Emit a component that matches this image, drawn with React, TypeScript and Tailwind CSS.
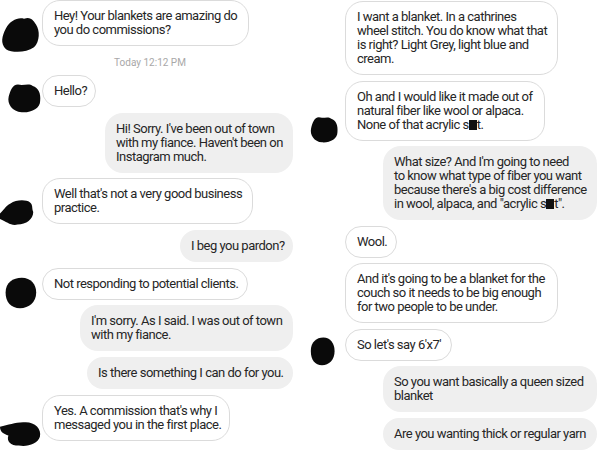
import type { ReactNode } from "react";

type Blob = { x: number; y: number; w: number; h: number; d: string };

const BLOBS: Record<string, string> = {
  a: "M6 14 C2 22 0 30 6 36 C12 40 26 40 34 34 C40 28 40 16 36 10 C32 4 30 2 24 4 C18 2 10 6 6 14 Z",
  b: "M4 18 C2 28 8 38 18 39 C28 40 38 34 38 24 C39 14 36 6 30 4 C26 0 20 4 14 2 C8 2 6 10 4 18 Z",
  c: "M0 22 C4 18 6 12 12 8 C18 2 30 2 34 6 C38 10 36 14 38 20 C38 30 30 38 20 38 C12 40 8 34 0 30 Z",
  d: "M4 20 C4 8 12 2 22 2 C32 2 38 10 38 20 C38 32 30 39 20 39 C10 39 4 32 4 20 Z",
  e: "M0 12 C8 10 14 6 22 6 C32 4 40 14 38 26 C36 36 26 40 18 38 C10 38 6 32 8 24 C4 22 0 20 0 12 Z",
};

function Smudge({ x, y, w, h, d }: Blob) {
  // redaction scribble over the avatar
  return (
    <svg
      viewBox="0 0 40 40"
      preserveAspectRatio="none"
      className="absolute"
      style={{ left: x, top: y, width: w, height: h }}
    >
      <path d={BLOBS[d]} fill="#0a0a0a" />
    </svg>
  );
}

function Received({ w, children, blob, gutter }: { w: string; children: ReactNode; blob?: Blob; gutter: string }) {
  return (
    <div className={`relative flex ${gutter}`}>
      {blob && <Smudge {...blob} />}
      <div
        className={`${w} shrink-0 rounded-[18px] border border-[#dbdbdb] bg-white px-[11px] py-[8px] whitespace-nowrap`}
      >
        {children}
      </div>
    </div>
  );
}

function Sent({ w, children, pr }: { w: string; children: ReactNode; pr: string }) {
  return (
    <div className={`flex justify-end ${pr}`}>
      <div className={`${w} shrink-0 rounded-[18px] bg-[#efefef] px-[11px] py-[9px] whitespace-nowrap`}>
        {children}
      </div>
    </div>
  );
}

function Bleep() {
  return <span className="inline-block h-[10px] w-[8px] bg-[#111] align-[-1px]" />;
}

export default function App() {
  return (
    <div
      className="flex h-[450px] w-[600px] overflow-hidden bg-white text-[13px] leading-[14px] tracking-[-0.5px] text-[#262626]"
      style={{ fontFamily: "Roboto, 'Noto Sans', sans-serif" }}
    >
      {/* ── Left screenshot ── */}
      <div className="flex w-[300px] flex-col">
        <Received w="w-[207px]" gutter="pl-[42px]" blob={{ x: 0, y: 15, w: 40, h: 38, d: "a" }}>
          Hey! Your blankets are amazing do
          <br />
          you do commissions?
        </Received>

        <div className="flex h-[29px] items-center justify-center pt-[5px] text-[10px] tracking-normal text-[#a8a8a8]">
          Today 12:12 PM
        </div>

        <div className="flex flex-col gap-[5.7px]">
          <Received w="w-[54px]" gutter="pl-[42px]" blob={{ x: 5, y: 8, w: 37, h: 30, d: "b" }}>
            Hello?
          </Received>
          <Sent w="w-[188px]" pr="pr-[7px]">
            Hi! Sorry. I've been out of town
            <br />
            with my fiance. Haven't been on
            <br />
            Instagram much.
          </Sent>
          <Received w="w-[211px]" gutter="pl-[42px]" blob={{ x: 0, y: 20, w: 35, h: 28, d: "c" }}>
            Well that's not a very good business
            <br />
            practice.
          </Received>
          <Sent w="w-[113px]" pr="pr-[7px]">
            I beg you pardon?
          </Sent>
          <Received w="w-[206px]" gutter="pl-[42px]" blob={{ x: 2, y: 8, w: 36, h: 33, d: "d" }}>
            Not responding to potential clients.
          </Received>
          <Sent w="w-[213px]" pr="pr-[7px]">
            I'm sorry. As I said. I was out of town
            <br />
            with my fiance.
          </Sent>
          <Sent w="w-[206px]" pr="pr-[7px]">
            Is there something I can do for you.
          </Sent>
          <Received w="w-[188px]" gutter="pl-[42px]" blob={{ x: 0, y: 23, w: 42, h: 29, d: "e" }}>
            Yes. A commission that's why I
            <br />
            messaged you in the first place.
          </Received>
        </div>
      </div>

      {/* ── Right screenshot ── */}
      <div className="flex w-[300px] flex-col gap-[5.5px] pt-[1px]">
        <Received w="w-[213px]" gutter="pl-[45px]">
          I want a blanket. In a cathrines
          <br />
          wheel stitch. You do know what that
          <br />
          is right? Light Grey, light blue and
          <br />
          cream.
        </Received>
        <Received w="w-[200px]" gutter="pl-[45px]" blob={{ x: 8, y: 35, w: 31, h: 27, d: "b" }}>
          Oh and I would like it made out of
          <br />
          natural fiber like wool or alpaca.
          <br />
          None of that acrylic s<Bleep />t.
        </Received>
        <Sent w="w-[214px]" pr="pr-[3px]">
          What size? And I'm going to need
          <br />
          to know what type of fiber you want
          <br />
          because there's a big cost difference
          <br />
          in wool, alpaca, and "acrylic s<Bleep />t".
        </Sent>
        <Received w="w-[52px]" gutter="pl-[45px]">
          Wool.
        </Received>
        <Received w="w-[213px]" gutter="pl-[45px]">
          And it's going to be a blanket for the
          <br />
          couch so it needs to be big enough
          <br />
          for two people to be under.
        </Received>
        <Received w="w-[107px]" gutter="pl-[45px]" blob={{ x: 8, y: 7, w: 28, h: 30, d: "d" }}>
          So let's say 6'x7'
        </Received>
        <Sent w="w-[214px]" pr="pr-[3px]">
          So you want basically a queen sized
          <br />
          blanket
        </Sent>
        <Sent w="w-[214px]" pr="pr-[3px]">
          Are you wanting thick or regular yarn
        </Sent>
      </div>
    </div>
  );
}
